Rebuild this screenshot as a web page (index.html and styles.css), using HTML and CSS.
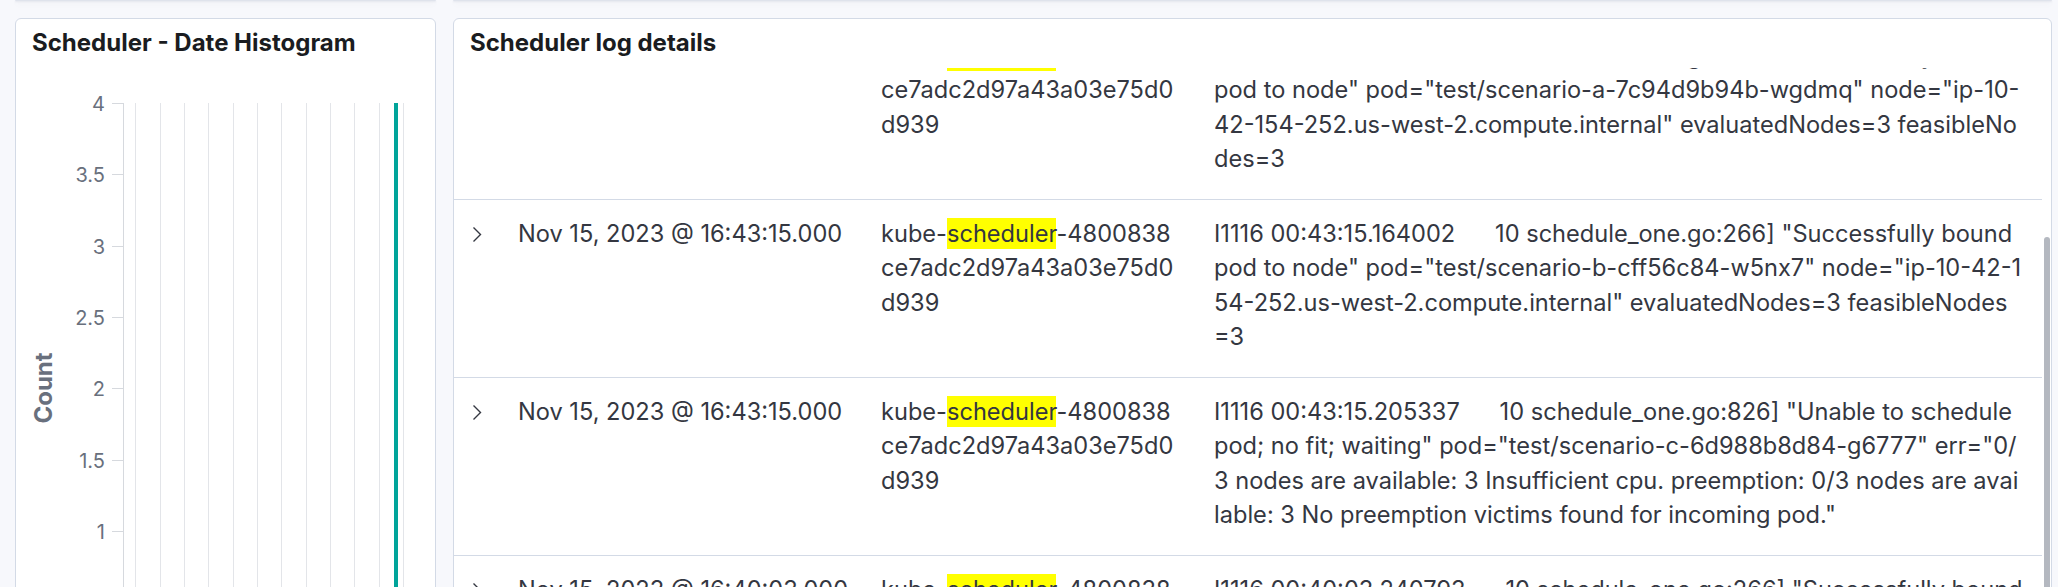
FILE: index.html
```html
<!DOCTYPE html>
<html lang="en">
<head>
<meta charset="utf-8">
<title>Scheduler dashboard</title>
<link rel="stylesheet" href="styles.css">
</head>
<body>
<div class="page">
  <div class="stubs">
    <div class="stub"></div>
    <div class="stub"></div>
  </div>
  <div class="panels">
    <section class="panel">
      <h2 class="panel-title">Scheduler - Date Histogram</h2>
      <svg class="chart" width="418" height="580" viewBox="0 0 418 580">
        <g class="grid">
          <line x1="119.5" y1="35" x2="119.5" y2="580"/>
          <line x1="144.5" y1="35" x2="144.5" y2="580"/>
          <line x1="168.5" y1="35" x2="168.5" y2="580"/>
          <line x1="192.5" y1="35" x2="192.5" y2="580"/>
          <line x1="217.5" y1="35" x2="217.5" y2="580"/>
          <line x1="241.5" y1="35" x2="241.5" y2="580"/>
          <line x1="265.5" y1="35" x2="265.5" y2="580"/>
          <line x1="290.5" y1="35" x2="290.5" y2="580"/>
          <line x1="314.5" y1="35" x2="314.5" y2="580"/>
          <line x1="338.5" y1="35" x2="338.5" y2="580"/>
          <line x1="363.5" y1="35" x2="363.5" y2="580"/>
          <line x1="387.5" y1="35" x2="387.5" y2="580"/>
        </g>
        <rect class="bar" x="378" y="35" width="4" height="545"/>
        <g class="axis">
          <line x1="107.5" y1="35" x2="107.5" y2="580"/>
          <line x1="96" y1="35.5" x2="107" y2="35.5"/>
          <line x1="96" y1="106.5" x2="107" y2="106.5"/>
          <line x1="96" y1="178.5" x2="107" y2="178.5"/>
          <line x1="96" y1="249.5" x2="107" y2="249.5"/>
          <line x1="96" y1="320.5" x2="107" y2="320.5"/>
          <line x1="96" y1="392.5" x2="107" y2="392.5"/>
          <line x1="96" y1="463.5" x2="107" y2="463.5"/>
        </g>
        <g class="tick-labels">
          <text x="89" y="42.5">4</text>
          <text x="89" y="113.5">3.5</text>
          <text x="89" y="185.5">3</text>
          <text x="89" y="256.5">2.5</text>
          <text x="89" y="327.5">2</text>
          <text x="89" y="399.5">1.5</text>
          <text x="89" y="470.5">1</text>
        </g>
        <text class="axis-title" x="27" y="320" dy="0.36em" transform="rotate(-90 27 320)">Count</text>
      </svg>
    </section>
    <section class="panel">
      <h2 class="panel-title">Scheduler log details</h2>
      <div class="log-scroll">
        <div class="rows">
          <div class="row">
            <div class="toggle"><svg width="11" height="17" viewBox="0 0 11 17"><polyline points="1.5,1.5 8.5,8.5 1.5,15.5"/></svg></div>
            <div class="cell">Nov 15, 2023 @ 16:43:15.000</div>
            <div class="cell">kube-<mark class="hl">scheduler</mark>-4800838<br>ce7adc2d97a43a03e75d0<br>d939</div>
            <div class="cell msg">I1116 00:43:15.144585      10 schedule_one.go:266] "Successfully bound<br>pod to node" pod="test/scenario-a-7c94d9b94b-wgdmq" node="ip-10-<br>42-154-252.us-west-2.compute.internal" evaluatedNodes=3 feasibleNo<br>des=3</div>
          </div>
          <div class="row">
            <div class="toggle"><svg width="11" height="17" viewBox="0 0 11 17"><polyline points="1.5,1.5 8.5,8.5 1.5,15.5"/></svg></div>
            <div class="cell">Nov 15, 2023 @ 16:43:15.000</div>
            <div class="cell">kube-<mark class="hl">scheduler</mark>-4800838<br>ce7adc2d97a43a03e75d0<br>d939</div>
            <div class="cell msg">I1116 00:43:15.164002      10 schedule_one.go:266] "Successfully bound<br>pod to node" pod="test/scenario-b-cff56c84-w5nx7" node="ip-10-42-1<br>54-252.us-west-2.compute.internal" evaluatedNodes=3 feasibleNodes<br>=3</div>
          </div>
          <div class="row">
            <div class="toggle"><svg width="11" height="17" viewBox="0 0 11 17"><polyline points="1.5,1.5 8.5,8.5 1.5,15.5"/></svg></div>
            <div class="cell">Nov 15, 2023 @ 16:43:15.000</div>
            <div class="cell">kube-<mark class="hl">scheduler</mark>-4800838<br>ce7adc2d97a43a03e75d0<br>d939</div>
            <div class="cell msg">I1116 00:43:15.205337      10 schedule_one.go:826] "Unable to schedule<br>pod; no fit; waiting" pod="test/scenario-c-6d988b8d84-g6777" err="0/<br>3 nodes are available: 3 Insufficient cpu. preemption: 0/3 nodes are avai<br>lable: 3 No preemption victims found for incoming pod."</div>
          </div>
          <div class="row">
            <div class="toggle"><svg width="11" height="17" viewBox="0 0 11 17"><polyline points="1.5,1.5 8.5,8.5 1.5,15.5"/></svg></div>
            <div class="cell">Nov 15, 2023 @ 16:40:03.000</div>
            <div class="cell">kube-<mark class="hl">scheduler</mark>-4800838<br>ce7adc2d97a43a03e75d0<br>d939</div>
            <div class="cell msg">I1116 00:40:03.240793      10 schedule_one.go:266] "Successfully bound<br>pod to node" pod="test/scenario-a-7c94d9b94b-wgdmq" node="ip-10-<br>42-154-252.us-west-2.compute.internal" evaluatedNodes=3 feasibleNo<br>des=3</div>
          </div>
        </div>
        <div class="thumb"></div>
      </div>
    </section>
  </div>
</div>
</body>
</html>
```

FILE: styles.css
```css
html, body {
  margin: 0;
  height: 100%;
  overflow: hidden;
}

body {
  background: #f7f8fc;
  font-family: Inter, "Noto Sans", sans-serif;
  color: #343741;
}

.page {
  padding: 0 6px 0 15px;
}

.stubs,
.panels {
  display: grid;
  grid-template-columns: 421px 1fr;
  column-gap: 17px;
}

.stubs {
  height: 1px;
  margin-bottom: 17px;
}

.stub {
  background: #dfe3ec;
  border-radius: 0 0 6px 6px;
  box-shadow: 0 1px 2px rgba(40, 55, 90, 0.12), 0 3px 6px rgba(40, 55, 90, 0.08);
}

.panel {
  background: #fff;
  border: 1px solid #d3dae6;
  border-radius: 6px;
  height: 640px;
  overflow: hidden;
  display: flex;
  flex-direction: column;
}

.panel-title {
  margin: 0;
  padding: 10px 16px 11px;
  font-size: 24px;
  line-height: 28px;
  font-weight: 700;
  color: #1a1c21;
}

/* chart */
.chart {
  display: block;
  font-family: Inter, "Noto Sans", sans-serif;
}

.grid line {
  stroke: #e3e5e9;
  stroke-width: 1;
}

.axis line {
  stroke: #d6d9de;
  stroke-width: 1;
}

.bar {
  fill: #00a49a;
}

.tick-labels text {
  font-size: 20px;
  fill: #69707d;
  text-anchor: end;
}

.axis-title {
  font-size: 24px;
  font-weight: 700;
  fill: #69707d;
  text-anchor: middle;
}

/* log table */
.log-scroll {
  position: relative;
  flex: 1;
  overflow: hidden;
}

.rows {
  margin: -46px 9px 0 0;
}

.row {
  display: grid;
  grid-template-columns: 64px 363px 333px 1fr;
  padding: 17px 0 23px;
  border-bottom: 1px solid #d3dae6;
  font-size: 23.6px;
  line-height: 34.25px;
}

.toggle {
  height: 34.25px;
  padding-left: 18px;
  display: flex;
  align-items: center;
}

.toggle polyline {
  fill: none;
  stroke: #343741;
  stroke-width: 1.4;
}

.cell {
  white-space: nowrap;
}

.msg {
  white-space: pre;
}

.hl {
  background: #ffff00;
  color: inherit;
  padding: 0.7px 0;
}

.thumb {
  position: absolute;
  right: 1px;
  top: 169px;
  width: 6px;
  height: 600px;
  border-radius: 3px;
  background: #b4b8c0;
}
```
